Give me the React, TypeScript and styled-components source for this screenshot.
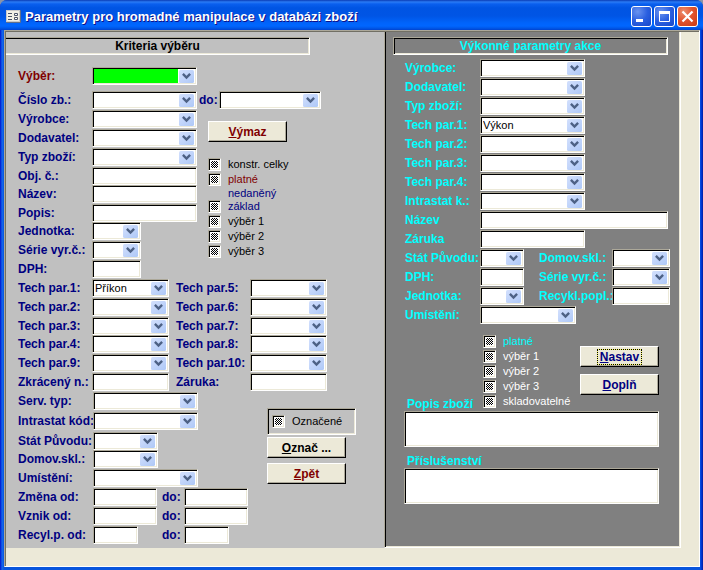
import React, { useEffect, useId, useRef } from 'react';
import styled, { createGlobalStyle, css } from 'styled-components';

const NAVY = '#000080';
const MAROON = '#800000';
const CYAN = '#00ffff';
const BEIGE = '#ece9d8';
const TAN = '#aca899';

const GlobalStyle = createGlobalStyle`
  *, *::before, *::after { box-sizing: border-box; }
  body { margin: 0; background: #8a94a8; }
  button, input, select, textarea { font: inherit; color: inherit; }
`;

const sunken = css`
  border: 1px solid;
  border-color: ${TAN} #fff #fff ${TAN};
  box-shadow: inset 1px 1px #000, inset -1px -1px ${BEIGE};
`;

/* ---------- window frame ---------- */

const Window = styled.div`
  display: flex;
  flex-direction: column;
  min-height: 100vh;
  padding: 0 3px 3px 4px;
  background: linear-gradient(to right, #0019cf 0, #0831d9 1px, #166aee 2px, #0855dd 4px, #0855dd calc(100% - 3px), #0040e0 calc(100% - 2px), #001ea0 100%);
  border-radius: 7px 7px 0 0;
  font: bold 12px/14px 'Liberation Sans', Arial, sans-serif;
`;

const TitleBar = styled.header`
  display: flex;
  align-items: center;
  gap: 4px;
  height: 30px;
  margin: 0 -3px 0 -4px;
  padding: 3px 5px 0 6px;
  border-radius: 7px 7px 0 0;
  background: linear-gradient(to bottom, #0a3cb4 0, #2a7bf5 2px, #0a5fee 4px, #0054e3 8px, #0055e5 16px, #0064fb 23px, #0066ff 26px, #0059ea 28px, #0043cf 30px);
`;

const Title = styled.h1`
  flex: 1;
  margin: 0;
  color: #fff;
  font: bold 13px/18px 'Liberation Sans', Arial, sans-serif;
  white-space: nowrap;
  text-shadow: 1px 1px #0f1089;
`;

const Caption = styled.div`
  display: flex;
  gap: 2px;
`;

const CaptionButton = styled.button<{ $close?: boolean }>`
  width: 21px;
  height: 21px;
  padding: 0;
  border: 1px solid #fff;
  border-radius: 3px;
  background: ${p =>
    p.$close
      ? 'radial-gradient(circle at 30% 25%, #ec8f70 0, #e2552f 45%, #c93a12 100%)'
      : 'radial-gradient(circle at 30% 25%, #6a93ef 0, #2a5fe0 50%, #1747c9 100%)'};

  svg { display: block; }
`;

const Client = styled.main`
  flex: 1;
  display: flex;
  align-items: flex-start;
  padding: 0 18px 18px 0;
  background: ${BEIGE};
  border: 1px solid;
  border-color: ${TAN} #fff #fff ${TAN};
  box-shadow: inset 1px 1px #716f64;
`;

/* ---------- panels ---------- */

const CriteriaPanel = styled.section`
  flex: 1 1 auto;
  align-self: stretch;
  margin: 1px 0 0 1px;
  padding: 5px 0 4px;
  background: #c0c0c0;
  color: ${NAVY};
`;

const ActionPanel = styled.section`
  flex: none;
  align-self: stretch;
  margin-top: 1px;
  padding: 5px 12px 0 8px;
  background: #808080;
  color: ${CYAN};
  border: solid;
  border-width: 0 1px 1px;
  border-color: ${TAN} #fff #fff ${TAN};
  box-shadow: inset 1px 0 #000, inset -1px -1px ${BEIGE};
`;

const PanelHeading = styled.h2<{ $left?: boolean }>`
  margin: 0;
  padding: 1px;
  height: 18px;
  font: inherit;
  text-align: center;
  ${sunken}
  ${p => p.$left && css`
    max-width: 304px;
    color: #000;
    border-left: 0;
    box-shadow: inset 0 1px #000, inset -1px -1px ${BEIGE};
  `}
`;

const Body = styled.div`
  padding-left: 11px;
`;

const Split = styled.div<{ $gap?: number }>`
  display: flex;
  align-items: flex-start;
  gap: ${p => p.$gap ?? 0}px;
`;

const Stack = styled.div<{ $gap?: number; $top?: number; $left?: number }>`
  display: flex;
  flex-direction: column;
  align-items: flex-start;
  gap: ${p => p.$gap ?? 0}px;
  margin-top: ${p => p.$top ?? 0}px;
  margin-left: ${p => p.$left ?? 0}px;
`;

const FieldGrid = styled.div<{ $cols: string; $gap?: number }>`
  display: grid;
  grid-template-columns: ${p => p.$cols};
  grid-auto-rows: 18px;
  row-gap: ${p => p.$gap ?? 1}px;
  align-items: center;
`;

/* ---------- controls ---------- */

const Label = styled.label<{ $color?: string }>`
  padding-left: 1px;
  color: ${p => p.$color ?? 'inherit'};
  white-space: nowrap;
`;

const RowLabel = styled(Label)`
  grid-column-start: 1;
`;

const TextBox = styled.input<{ $w: number; $wide?: boolean }>`
  grid-column: ${p => (p.$wide ? '2 / -1' : 'auto')};
  width: ${p => p.$w}px;
  height: 18px;
  padding: 1px 3px;
  background: #fff;
  border-radius: 0;
  color: #000;
  font-weight: normal;
  font-size: 11px;
  ${sunken}
`;

const ComboFrame = styled.span<{ $w: number; $fill?: string; $wide?: boolean }>`
  grid-column: ${p => (p.$wide ? '2 / -1' : 'auto')};
  display: grid;
  align-items: center;
  width: ${p => p.$w}px;
  height: 18px;
  padding: 1px;
  background: linear-gradient(to left, #fff 18px, ${p => p.$fill ?? '#fff'} 0);
  ${sunken}

  select, svg { grid-area: 1 / 1; }

  select {
    appearance: none;
    width: 100%;
    height: 14px;
    padding: 0 17px 0 1px;
    border: 0;
    outline: 0;
    background: transparent;
    color: #000;
    font-weight: normal;
    font-size: 11px;
    line-height: 13px;
  }

  svg {
    justify-self: end;
    margin-right: 1px;
    pointer-events: none;
  }
`;

const PushButton = styled.button<{ $color: string }>`
  width: 79px;
  height: 21px;
  padding: 0;
  display: flex;
  align-items: center;
  justify-content: center;
  background: ${BEIGE};
  color: ${p => p.$color};
  border: 1px solid;
  border-color: #fff #000 #000 #fff;
  border-radius: 0;
  box-shadow: inset -1px -1px ${TAN};
`;

const FocusRing = styled.span`
  padding: 0 2px;
  outline: 1px dotted #000;
  box-shadow: 0 0 0 1px #ffff66;
`;

const CheckRow = styled.label<{ $color: string; $short?: boolean }>`
  display: flex;
  align-items: center;
  gap: 7px;
  height: ${p => (p.$short ? 10 : 13)}px;
  padding-left: ${p => (p.$short ? 20 : 0)}px;
  color: ${p => p.$color};
  font-weight: normal;
  font-size: 11px;
  line-height: 13px;
  white-space: nowrap;
`;

const TriBox = styled.input`
  appearance: none;
  flex: none;
  width: 13px;
  height: 13px;
  margin: 0;
  padding: 2px;
  background:
    repeating-conic-gradient(#000 0 25%, #fff 0 50%) 0 0 / 2px 2px content-box content-box,
    #fff;
  ${sunken}
`;

const MarkFrame = styled.div`
  display: flex;
  align-items: center;
  width: 89px;
  height: 27px;
  padding-left: 4px;
  ${sunken}
`;

const MemoLabel = styled.label`
  padding-left: 3px;
  white-space: nowrap;
`;

const Memo = styled.textarea`
  display: block;
  width: 255px;
  height: 36px;
  padding: 2px 3px;
  resize: none;
  background: #fff;
  border-radius: 0;
  color: #000;
  font-weight: normal;
  font-size: 11px;
  ${sunken}
`;

const MemoCaption = styled.div`
  align-self: flex-end;
  width: 79px;
`;

const CheckColumn = styled.div`
  display: flex;
  flex-direction: column;
  gap: 2px;
  width: 97px;
  padding-bottom: 3px;
`;

/* ---------- composed pieces ---------- */

type FieldProps = {
  label: string;
  w: number;
  value?: string;
  fill?: string;
  color?: string;
  follow?: boolean;
  wide?: boolean;
};

function Combo({ label, w, value = '', fill, color, follow, wide }: FieldProps) {
  const id = useId();
  const L = follow ? Label : RowLabel;
  return (
    <>
      <L htmlFor={id} $color={color}>{label}</L>
      <ComboFrame $w={w} $fill={fill} $wide={wide}>
        <select id={id} defaultValue={value}>
          <option value={value}>{value}</option>
        </select>
        <svg width="15" height="14" viewBox="0 0 15 14" aria-hidden="true">
          <defs>
            <linearGradient id={`${id}g`} x1="0" y1="0" x2="1" y2="1">
              <stop offset="0" stopColor="#d3e0fd" />
              <stop offset="1" stopColor="#aec8f7" />
            </linearGradient>
          </defs>
          <rect width="15" height="13" y="1" rx="1.5" fill={`url(#${id}g)`} />
          <path d="M3.9 4.9L7.5 8.5L11.1 4.9" fill="none" stroke="#4d6185" strokeWidth="2.4" />
        </svg>
      </ComboFrame>
    </>
  );
}

function Text({ label, w, follow, wide }: FieldProps) {
  const id = useId();
  const L = follow ? Label : RowLabel;
  return (
    <>
      <L htmlFor={id}>{label}</L>
      <TextBox id={id} type="text" $w={w} $wide={wide} />
    </>
  );
}

function Check({ label, color = '#000' }: { label: string; color?: string }) {
  const ref = useRef<HTMLInputElement>(null);
  useEffect(() => {
    if (ref.current) ref.current.indeterminate = true;
  }, []);
  return (
    <CheckRow $color={color}>
      <TriBox ref={ref} type="checkbox" />
      {label}
    </CheckRow>
  );
}

function FormIcon() {
  return (
    <svg width="15" height="13" viewBox="0 0 15 13" aria-hidden="true">
      <rect width="15" height="13" rx="1" fill="#5f6f8c" />
      <rect x="0.5" y="0.5" width="13" height="11" fill="#f3f1e6" stroke="#c9c9c9" />
      <path d="M2 3.5h4M2 6.5h4M2 9.5h4" stroke="#4c5568" />
      <path d="M8.5 3.5h3v2h-3zM8.5 7.5h3v2h-3z" fill="#fff" stroke="#4c5568" />
    </svg>
  );
}

export default function App() {
  return (
    <>
      <GlobalStyle />
      <Window>
        <TitleBar>
          <FormIcon />
          <Title>Parametry pro hromadné manipulace v databázi zboží</Title>
          <Caption>
            <CaptionButton type="button" aria-label="Minimalizovat">
              <svg width="19" height="19"><path d="M4 13.5h7" stroke="#fff" strokeWidth="3" /></svg>
            </CaptionButton>
            <CaptionButton type="button" aria-label="Maximalizovat">
              <svg width="19" height="19">
                <path d="M4.5 5v9.5h10V5" fill="none" stroke="#fff" />
                <path d="M4 5.5h11" stroke="#fff" strokeWidth="3" />
              </svg>
            </CaptionButton>
            <CaptionButton type="button" aria-label="Zavřít" $close>
              <svg width="19" height="19"><path d="M4.5 4.5l10 10M14.5 4.5l-10 10" stroke="#fff" strokeWidth="2.2" /></svg>
            </CaptionButton>
          </Caption>
        </TitleBar>

        <Client>
          <CriteriaPanel>
            <PanelHeading $left>Kriteria výběru</PanelHeading>
            <Body>
              <Stack $top={12}>
                <FieldGrid $cols="75px auto">
                  <Combo label="Výběr:" w={105} fill="#00ff00" color={MAROON} />
                </FieldGrid>
              </Stack>

              <Stack $top={6}>
                <Split>
                  <Stack>
                    <FieldGrid $cols="75px 106px">
                      <Combo label="Číslo zb.:" w={105} />
                      <Combo label="Výrobce:" w={105} />
                      <Combo label="Dodavatel:" w={105} />
                      <Combo label="Typ zboží:" w={105} />
                      <Text label="Obj. č.:" w={105} />
                    </FieldGrid>
                    <FieldGrid $cols="75px 106px">
                      <Text label="Název:" w={105} />
                      <Text label="Popis:" w={105} />
                    </FieldGrid>
                    <FieldGrid $cols="75px 106px">
                      <Combo label="Jednotka:" w={49} />
                      <Combo label="Série vyr.č.:" w={49} />
                      <Text label="DPH:" w={49} />
                    </FieldGrid>
                  </Stack>
                  <Stack>
                    <FieldGrid $cols="21px auto">
                      <Combo label="do:" w={102} />
                    </FieldGrid>
                    <Stack $top={12} $left={10} $gap={16}>
                      <PushButton type="button" $color={MAROON}><span><u>V</u>ýmaz</span></PushButton>
                      <Stack $gap={2}>
                        <Check label="konstr. celky" />
                        <Check label="platné" color={MAROON} />
                        <CheckRow as="span" $color={NAVY} $short>nedaněný</CheckRow>
                        <Check label="základ" color={NAVY} />
                        <Check label="výběr 1" />
                        <Check label="výběr 2" />
                        <Check label="výběr 3" />
                      </Stack>
                    </Stack>
                  </Stack>
                </Split>
              </Stack>

              <Stack $top={1}>
                <FieldGrid $cols="75px 83px 75px auto">
                  <Combo label="Tech par.1:" w={77} value="Příkon" />
                  <Combo label="Tech par.5:" w={77} follow />
                  <Combo label="Tech par.2:" w={77} />
                  <Combo label="Tech par.6:" w={77} follow />
                  <Combo label="Tech par.3:" w={77} />
                  <Combo label="Tech par.7:" w={77} follow />
                </FieldGrid>
                <FieldGrid $cols="75px 83px 75px auto">
                  <Combo label="Tech par.4:" w={77} />
                  <Combo label="Tech par.8:" w={77} follow />
                  <Combo label="Tech par.9:" w={77} />
                  <Combo label="Tech par.10:" w={77} follow />
                  <Text label="Zkrácený n.:" w={77} />
                  <Text label="Záruka:" w={77} follow />
                </FieldGrid>
              </Stack>

              <Stack $top={1}>
                <Split $gap={19}>
                  <Stack>
                    <FieldGrid $cols="76px auto" $gap={2}>
                      <Combo label="Serv. typ:" w={105} />
                      <Combo label="Intrastat kód:" w={105} />
                      <Combo label="Stát Původu:" w={65} />
                    </FieldGrid>
                    <FieldGrid $cols="76px 68px 23px 64px">
                      <Combo label="Domov.skl.:" w={65} />
                      <Combo label="Umístění:" w={105} wide />
                      <Text label="Změna od:" w={64} />
                      <Text label="do:" w={64} follow />
                      <Text label="Vznik od:" w={64} />
                      <Text label="do:" w={64} follow />
                      <Text label="Recyl.p. od:" w={45} />
                      <Text label="do:" w={45} follow />
                    </FieldGrid>
                  </Stack>
                  <Stack $top={16} $gap={5}>
                    <Stack $gap={2}>
                      <MarkFrame><Check label="Označené" /></MarkFrame>
                      <PushButton type="button" $color="#000"><span><u>O</u>znač ...</span></PushButton>
                    </Stack>
                    <PushButton type="button" $color={MAROON}><span><u>Z</u>pět</span></PushButton>
                  </Stack>
                </Split>
              </Stack>
            </Body>
          </CriteriaPanel>

          <ActionPanel>
            <PanelHeading>Výkonné parametry akce</PanelHeading>
            <Body>
              <Stack $top={4}>
                <FieldGrid $cols="76px 58px 74px 56px">
                  <Combo label="Výrobce:" w={105} wide />
                  <Combo label="Dodavatel:" w={105} wide />
                  <Combo label="Typ zboží:" w={105} wide />
                  <Combo label="Tech par.1:" w={105} value="Výkon" wide />
                  <Combo label="Tech par.2:" w={105} wide />
                  <Combo label="Tech par.3:" w={105} wide />
                  <Combo label="Tech par.4:" w={105} wide />
                  <Combo label="Intrastat k.:" w={105} wide />
                  <Text label="Název" w={188} wide />
                  <Text label="Záruka" w={105} wide />
                  <Combo label="Stát Původu:" w={44} />
                  <Combo label="Domov.skl.:" w={58} follow />
                  <Text label="DPH:" w={44} />
                  <Combo label="Série vyr.č.:" w={58} follow />
                  <Combo label="Jednotka:" w={44} />
                  <Text label="Recykl.popl.:" w={58} follow />
                  <Combo label="Umístění:" w={96} wide />
                </FieldGrid>
              </Stack>

              <Stack $top={11}>
                <Split>
                  <MemoCaption><MemoLabel htmlFor="popis">Popis zboží</MemoLabel></MemoCaption>
                  <CheckColumn>
                    <Check label="platné" color={CYAN} />
                    <Check label="výběr 1" color="#fff" />
                    <Check label="výběr 2" color="#fff" />
                    <Check label="výběr 3" color="#fff" />
                    <Check label="skladovatelné" color="#fff" />
                  </CheckColumn>
                  <Stack $top={11} $gap={7}>
                    <PushButton type="button" $color={NAVY}><FocusRing><u>N</u>astav</FocusRing></PushButton>
                    <PushButton type="button" $color={NAVY}><span><u>D</u>oplň</span></PushButton>
                  </Stack>
                </Split>
                <Memo id="popis" />
              </Stack>
              <Stack $top={7}>
                <MemoLabel htmlFor="prislusenstvi">Příslušenství</MemoLabel>
                <Memo id="prislusenstvi" />
              </Stack>
            </Body>
          </ActionPanel>
        </Client>
      </Window>
    </>
  );
}
